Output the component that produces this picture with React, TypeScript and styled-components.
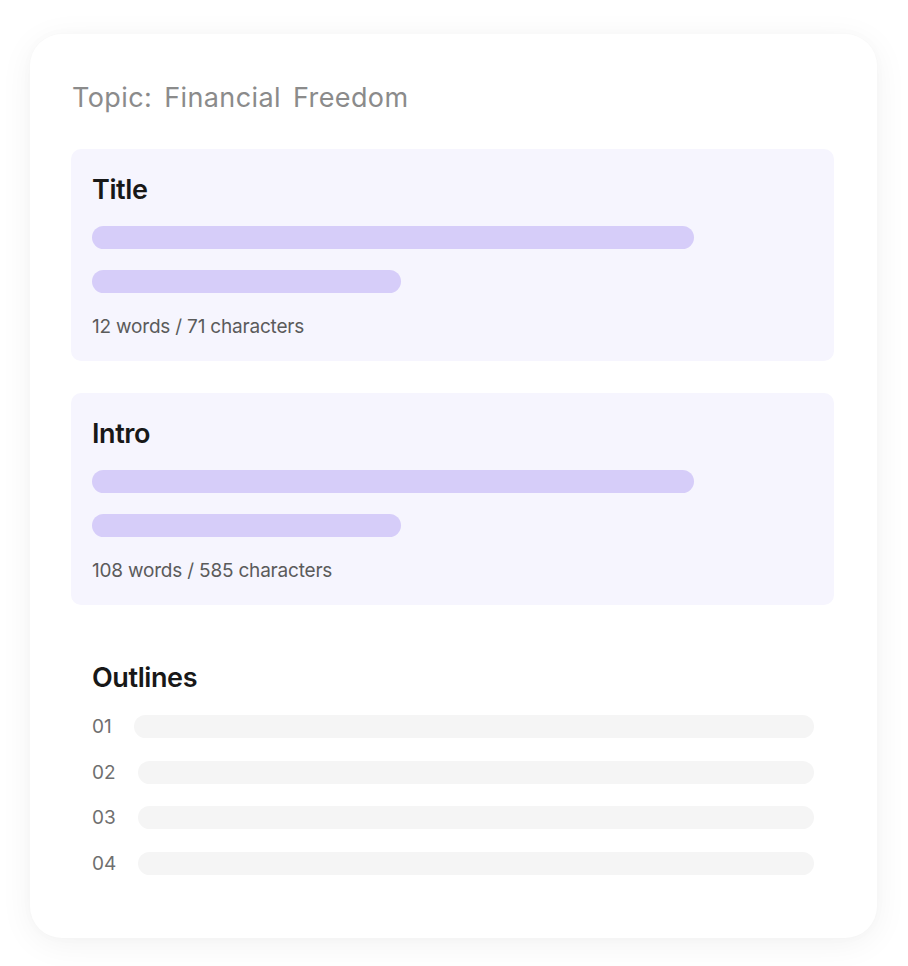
import React from "react";
import styled, { createGlobalStyle } from "styled-components";

const Global = createGlobalStyle`
  html, body { margin: 0; padding: 0; background: #ffffff; }
  body { font-family: Inter, "Noto Sans", "Liberation Sans", sans-serif; -webkit-font-smoothing: antialiased; }
`;

const Page = styled.div`
  width: 908px;
  height: 966px;
  padding: 34px 0 0 30px;
  box-sizing: border-box;
  background: #ffffff;
`;

const Card = styled.div`
  width: 847px;
  height: 904px;
  box-sizing: border-box;
  background: #ffffff;
  border-radius: 32px;
  box-shadow: 0 6px 34px rgba(0, 0, 0, 0.055), 0 0 12px rgba(0, 0, 0, 0.02);
  padding: 49px 43px 0 41px;
  display: flex;
  flex-direction: column;
`;

const Topic = styled.div`
  font-size: 27px;
  line-height: 30px;
  color: #8b8b8b;
  font-weight: 400;
  letter-spacing: 0.4px;
  word-spacing: 4px;
  margin-bottom: 36px;
  padding-left: 1px;
`;

const Sections = styled.div`
  display: flex;
  flex-direction: column;
  gap: 32px;
`;

const Panel = styled.div<{ $tinted?: boolean }>`
  background: ${(p) => (p.$tinted ? "#f6f5fe" : "transparent")};
  border-radius: 10px;
  padding: 27px 20px 23px 21px;
  display: flex;
  flex-direction: column;
`;

const Heading = styled.div`
  font-size: 27px;
  line-height: 28px;
  font-weight: 600;
  color: #181818;
  letter-spacing: -0.4px;
`;

const Bars = styled.div`
  display: flex;
  flex-direction: column;
  gap: 21px;
  margin-top: 22px;
`;

const Bar = styled.div<{ $w: number }>`
  width: ${(p) => p.$w}px;
  height: 23px;
  border-radius: 12px;
  background: #d6cdf9;
`;

const Meta = styled.div`
  margin-top: 23px;
  font-size: 19px;
  line-height: 22px;
  color: #5b5b5b;
  letter-spacing: -0.2px;
`;

const OutlineList = styled.div`
  display: flex;
  flex-direction: column;
  gap: 22.5px;
  margin-top: 23px;
`;

const OutlineRow = styled.div`
  display: flex;
  align-items: center;
  gap: 22px;
`;

const Num = styled.span`
  font-size: 19px;
  line-height: 23px;
  color: #6f6f6f;
  flex: none;
`;

const GreyBar = styled.div`
  flex: 1;
  height: 23px;
  border-radius: 12px;
  background: #f5f5f5;
`;

const sections = [
  { title: "Title", meta: "12 words / 71 characters" },
  { title: "Intro", meta: "108 words / 585 characters" },
];

export default function App() {
  return (
    <>
      <Global />
      <Page>
        <Card>
          <Topic>Topic: Financial Freedom</Topic>
          <Sections>
            {sections.map((s) => (
              <Panel $tinted key={s.title}>
                <Heading>{s.title}</Heading>
                <Bars>
                  <Bar $w={602} />
                  <Bar $w={309} />
                </Bars>
                <Meta>{s.meta}</Meta>
              </Panel>
            ))}
            <Panel>
              <Heading>Outlines</Heading>
              <OutlineList>
                {["01", "02", "03", "04"].map((n) => (
                  <OutlineRow key={n}>
                    <Num>{n}</Num>
                    <GreyBar />
                  </OutlineRow>
                ))}
              </OutlineList>
            </Panel>
          </Sections>
        </Card>
      </Page>
    </>
  );
}
